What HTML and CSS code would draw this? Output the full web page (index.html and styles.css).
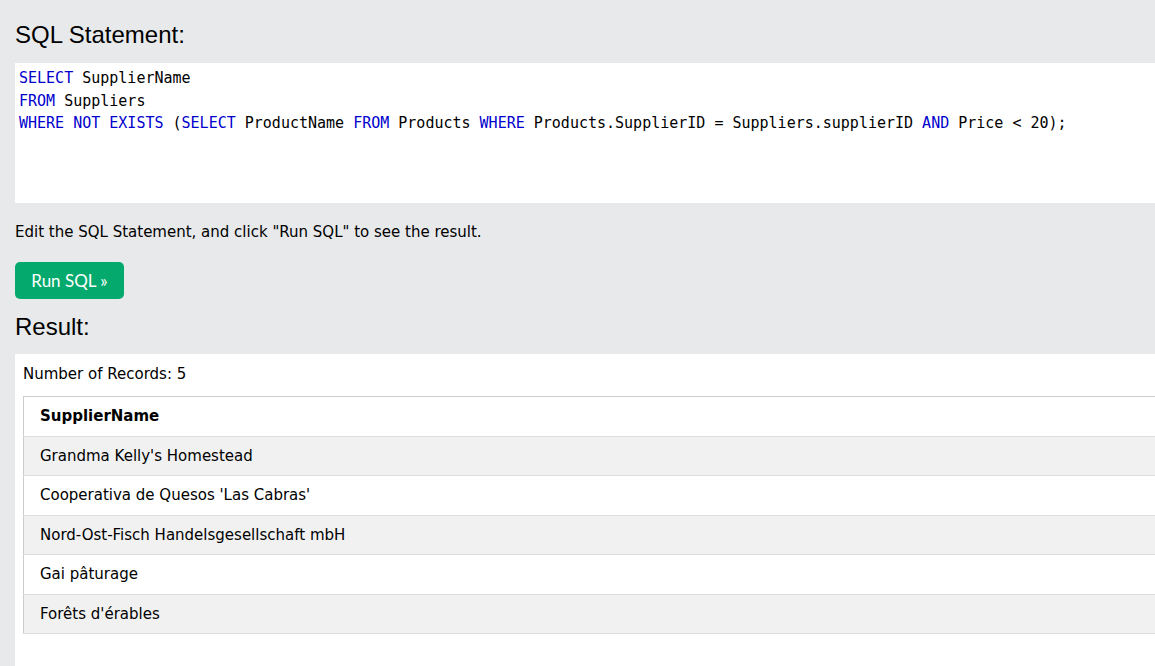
FILE: index.html
```html
<!DOCTYPE html>
<html lang="en">
<head>
<meta charset="utf-8">
<title>SQL Tryit</title>
<link rel="stylesheet" href="styles.css">
</head>
<body>
<div class="page">
  <h3 class="heading">SQL Statement:</h3>
  <div class="editor">
    <div class="code-line"><span class="kw">SELECT</span> SupplierName</div>
    <div class="code-line"><span class="kw">FROM</span> Suppliers</div>
    <div class="code-line"><span class="kw">WHERE</span> <span class="kw">NOT</span> <span class="kw">EXISTS</span> (<span class="kw">SELECT</span> ProductName <span class="kw">FROM</span> Products <span class="kw">WHERE</span> Products.SupplierID = Suppliers.supplierID <span class="kw">AND</span> Price &lt; 20);</div>
  </div>
  <p class="hint">Edit the SQL Statement, and click "Run SQL" to see the result.</p>
  <button class="run-btn" type="button">Run SQL »</button>
  <h3 class="heading result-heading">Result:</h3>
  <div class="result">
    <div class="count">Number of Records: 5</div>
    <table class="grid">
      <tr><th>SupplierName</th></tr>
      <tr><td>Grandma Kelly's Homestead</td></tr>
      <tr><td>Cooperativa de Quesos 'Las Cabras'</td></tr>
      <tr><td>Nord-Ost-Fisch Handelsgesellschaft mbH</td></tr>
      <tr><td>Gai pâturage</td></tr>
      <tr><td>Forêts d'érables</td></tr>
    </table>
  </div>
</div>
</body>
</html>
```

FILE: styles.css
```css
html, body {
  margin: 0;
  padding: 0;
  overflow: hidden;
}
body {
  background: #e7e9eb;
  font-family: "DejaVu Sans", Verdana, sans-serif;
  font-size: 15px;
  color: #000;
}
.page {
  padding-left: 15px;
  width: 1200px;
}
.heading {
  margin: 0;
  padding-top: 20px;
  height: 30px;
  line-height: 30px;
  font-family: "Liberation Sans", Arial, sans-serif;
  font-size: 24px;
  font-weight: normal;
  margin-bottom: 13px;
}
.editor {
  background: #fff;
  height: 140px;
  box-sizing: border-box;
  padding: 4px 4px 3px;
  font-family: "DejaVu Sans Mono", monospace;
  font-size: 15px;
  line-height: 22.5px;
}
.code-line {
  white-space: pre;
}
.kw {
  color: #0000cd;
}
.hint {
  margin: 0;
  padding-top: 18px;
  line-height: 22px;
}
.run-btn {
  display: block;
  margin-top: 19px;
  width: 109px;
  height: 37px;
  border: none;
  border-radius: 5px;
  background: #04aa6d;
  color: #fff;
  font-family: "Lato", "Open Sans", sans-serif;
  font-size: 17px;
  padding: 0;
}
.result-heading {
  padding-top: 13px;
  margin-bottom: 12px;
  height: 30px;
}
.result {
  background: #fff;
  padding: 9px 8px 8px;
  height: 320px;
}
.count {
  line-height: 22px;
  margin-bottom: 11px;
}
.grid {
  border-collapse: collapse;
  border: 1px solid #ccc;
  width: 100%;
}
.grid th, .grid td {
  text-align: left;
  padding: 8px 8px 8px 16px;
  line-height: 22.5px;
  border-bottom: 1px solid #ddd;
}
.grid tr:nth-child(even) {
  background: #f1f1f1;
}
```
